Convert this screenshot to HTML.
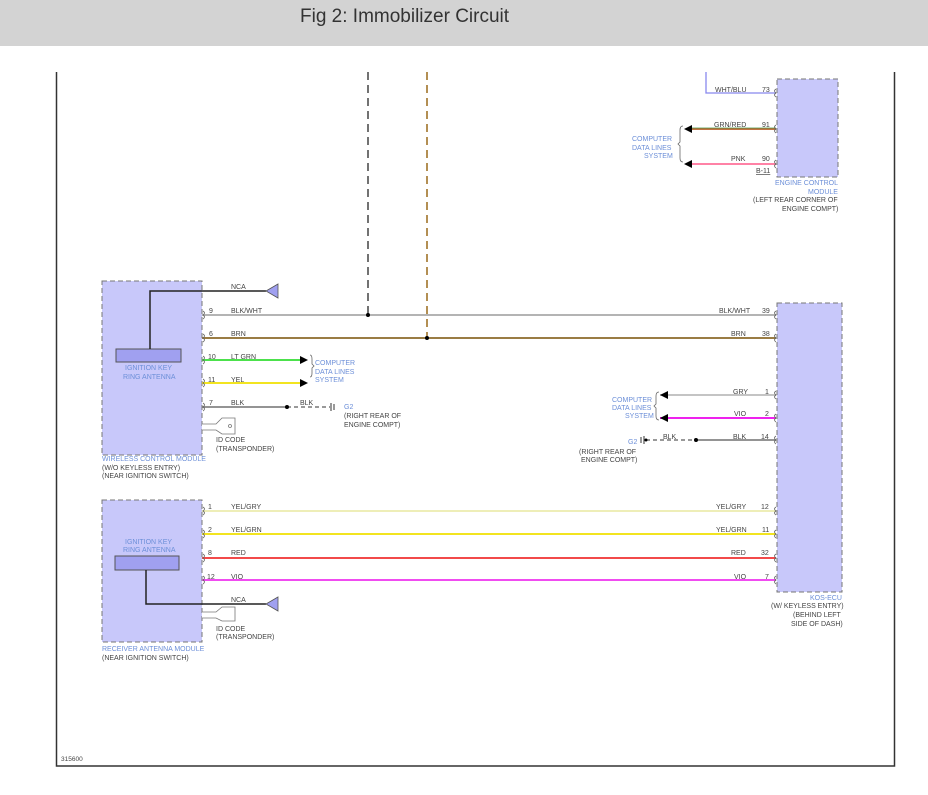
<!DOCTYPE html>
<html><head><meta charset="utf-8"><style>
html,body{margin:0;padding:0;background:#fff;width:928px;height:795px;overflow:hidden}
.hdr{position:absolute;left:0;top:0;width:928px;height:46px;background:#d3d3d3}
.hdr span{position:absolute;left:300px;top:6px;font:19px "Liberation Sans",sans-serif;color:#333}
svg{position:absolute;left:0;top:0}
text{font-family:"Liberation Sans",sans-serif;font-size:7px;fill:#444}
.b{fill:#6c8fd8}
</style></head><body>
<div class="hdr"><span>Fig 2: Immobilizer Circuit</span></div>
<svg width="928" height="795" viewBox="0 0 928 795">
<path d="M56.5 72V766H894.5V72" fill="none" stroke="#333" stroke-width="1.5"/>
<text x="61" y="761" style="font-size:6.5px">315600</text>

<g fill="#c8c8fa" stroke="#777" stroke-dasharray="5,3">
<rect x="102" y="281" width="100" height="174"/>
<rect x="102" y="500" width="100" height="142"/>
<rect x="777" y="79" width="61" height="98"/>
<rect x="777" y="303" width="65" height="289"/>
</g>
<rect x="116" y="349" width="65" height="13" fill="#a0a0f0" stroke="#555"/>
<rect x="115" y="556" width="64" height="14" fill="#a0a0f0" stroke="#555"/>
<text class="b" x="125" y="370">IGNITION KEY</text>
<text class="b" x="123" y="379">RING ANTENNA</text>
<text class="b" x="125" y="544">IGNITION KEY</text>
<text class="b" x="123" y="552">RING ANTENNA</text>

<path d="M368 72V315" stroke="#444" stroke-width="1.5" stroke-dasharray="8,5"/>
<path d="M427 72V338" stroke="#9a6a1a" stroke-width="1.5" stroke-dasharray="8,5"/>

<path d="M150 349V291H266" fill="none" stroke="#222" stroke-width="1.5"/>
<path d="M266 291L278 284V298Z" fill="#a0a0f0" stroke="#555" stroke-width="0.8"/>
<path d="M202 315H776" stroke="#888" stroke-width="1.3"/>
<path d="M202 338H776" stroke="#8b6a2a" stroke-width="1.7"/>
<path d="M202 360H300" stroke="#33dd33" stroke-width="1.7"/>
<path d="M202 383H300" stroke="#f0e000" stroke-width="1.7"/>
<path d="M300 356L308 360L300 364Z M300 379L308 383L300 387Z" fill="#000"/>
<path d="M202 407H287" stroke="#555" stroke-width="1.3"/>
<path d="M287 407H330" stroke="#333" stroke-dasharray="4,3"/>
<path d="M331 403V411M334 404V410" stroke="#333"/>
<circle cx="287" cy="407" r="2" fill="#000"/>
<circle cx="368" cy="315" r="2" fill="#000"/>
<circle cx="427" cy="338" r="2" fill="#000"/>
<path d="M310 355q2 0 2 4v5l2 2l-2 2v5q0 4-2 4" fill="none" stroke="#666" stroke-width="0.8"/>
<text x="231" y="289">NCA</text>
<text x="209" y="313">9</text><text x="231" y="313">BLK/WHT</text>
<text x="209" y="336">6</text><text x="231" y="336">BRN</text>
<text x="208" y="359">10</text><text x="231" y="359">LT GRN</text>
<text x="208" y="382">11</text><text x="231" y="382">YEL</text>
<text x="209" y="405">7</text><text x="231" y="405">BLK</text><text x="300" y="405">BLK</text>
<text class="b" x="315" y="365">COMPUTER</text>
<text class="b" x="315" y="374">DATA LINES</text>
<text class="b" x="315" y="382">SYSTEM</text>
<text class="b" x="344" y="409">G2</text>
<text x="344" y="418">(RIGHT REAR OF</text>
<text x="344" y="427">ENGINE COMPT)</text>
<g fill="#fff" stroke="#777" stroke-width="0.8">
<path d="M202 424H216L222 418H235V434H222L216 430H202"/>
<circle cx="230" cy="426" r="1.5"/>
</g>
<text x="216" y="442">ID CODE</text>
<text x="216" y="451">(TRANSPONDER)</text>
<text class="b" x="102" y="461">WIRELESS CONTROL MODULE</text>
<text x="102" y="470">(W/O KEYLESS ENTRY)</text>
<text x="102" y="478">(NEAR IGNITION SWITCH)</text>

<path d="M202 511H776" stroke="#e8e8a0" stroke-width="1.4"/>
<path d="M202 534H776" stroke="#f0e000" stroke-width="1.7"/>
<path d="M202 558H776" stroke="#f03030" stroke-width="1.7"/>
<path d="M202 580H776" stroke="#ee33ee" stroke-width="1.7"/>
<path d="M146 570V604H266" fill="none" stroke="#222" stroke-width="1.5"/>
<path d="M266 604L278 597V611Z" fill="#a0a0f0" stroke="#555" stroke-width="0.8"/>
<text x="208" y="509">1</text><text x="231" y="509">YEL/GRY</text>
<text x="208" y="532">2</text><text x="231" y="532">YEL/GRN</text>
<text x="208" y="555">8</text><text x="231" y="555">RED</text>
<text x="207" y="579">12</text><text x="231" y="579">VIO</text>
<text x="231" y="602">NCA</text>
<g fill="#fff" stroke="#777" stroke-width="0.8">
<path d="M202 612H216L222 607H235V621H222L216 618H202"/>
</g>
<text x="216" y="631">ID CODE</text>
<text x="216" y="639">(TRANSPONDER)</text>
<text class="b" x="102" y="651">RECEIVER ANTENNA MODULE</text>
<text x="102" y="660">(NEAR IGNITION SWITCH)</text>

<path d="M706 72V93H776" fill="none" stroke="#8888ee" stroke-width="1.3"/>
<path d="M690 129H776" stroke="#b8602a" stroke-width="1.7"/>
<path d="M690 128H776" stroke="#4a9a4a" stroke-width="0.7"/>
<path d="M690 164H776" stroke="#ff7099" stroke-width="1.7"/>
<path d="M684 129L692 125V133Z M684 164L692 160V168Z" fill="#000"/>
<path d="M683 126q-3 0-3 4v12l-2 2l2 2v12q0 4 3 4" fill="none" stroke="#666" stroke-width="0.8"/>
<text x="715" y="92">WHT/BLU</text><text x="762" y="92">73</text>
<text x="714" y="127">GRN/RED</text><text x="762" y="127">91</text>
<text x="731" y="161">PNK</text><text x="762" y="161">90</text>
<text x="756" y="173" style="text-decoration:underline">B-11</text>
<text class="b" x="632" y="141">COMPUTER</text>
<text class="b" x="632" y="150">DATA LINES</text>
<text class="b" x="644" y="158">SYSTEM</text>
<text class="b" x="775" y="185">ENGINE CONTROL</text>
<text class="b" x="808" y="194">MODULE</text>
<text x="753" y="202">(LEFT REAR CORNER OF</text>
<text x="782" y="211">ENGINE COMPT)</text>

<path d="M660 395H776" stroke="#bbb" stroke-width="1.7"/>
<path d="M660 418H776" stroke="#ee22ee" stroke-width="2"/>
<path d="M660 395L668 391V399Z M660 418L668 414V422Z" fill="#000"/>
<path d="M659 392q-3 0-3 4v8l-2 2l2 2v8q0 4 3 4" fill="none" stroke="#666" stroke-width="0.8"/>
<path d="M696 440H776" stroke="#555" stroke-width="1.3"/>
<path d="M646 440H696" stroke="#333" stroke-dasharray="4,3"/>
<path d="M644 436V444M641 437V443" stroke="#333"/>
<circle cx="696" cy="440" r="2" fill="#000"/>
<circle cx="646" cy="440" r="1.5" fill="#000"/>
<text x="733" y="394">GRY</text><text x="765" y="394">1</text>
<text x="734" y="416">VIO</text><text x="765" y="416">2</text>
<text x="733" y="439">BLK</text><text x="761" y="439">14</text>
<text x="663" y="439">BLK</text>
<text class="b" x="612" y="402">COMPUTER</text>
<text class="b" x="612" y="410">DATA LINES</text>
<text class="b" x="625" y="418">SYSTEM</text>
<text class="b" x="628" y="444">G2</text>
<text x="579" y="454">(RIGHT REAR OF</text>
<text x="581" y="462">ENGINE COMPT)</text>
<text x="716" y="509">YEL/GRY</text><text x="761" y="509">12</text>
<text x="716" y="532">YEL/GRN</text><text x="762" y="532">11</text>
<text x="731" y="555">RED</text><text x="761" y="555">32</text>
<text x="734" y="579">VIO</text><text x="765" y="579">7</text>
<text class="b" x="810" y="600">KOS-ECU</text>
<text x="771" y="608">(W/ KEYLESS ENTRY)</text>
<text x="793" y="617">(BEHIND LEFT</text>
<text x="791" y="626">SIDE OF DASH)</text>

<g fill="none" stroke="#666" stroke-width="0.8">
<path d="M203 311q3 2 0 4q3 2 0 4M203 334q3 2 0 4q3 2 0 4M203 356q3 2 0 4q3 2 0 4M203 379q3 2 0 4q3 2 0 4M203 403q3 2 0 4q3 2 0 4"/>
<path d="M203 507q3 2 0 4q3 2 0 4M203 530q3 2 0 4q3 2 0 4M203 554q3 2 0 4q3 2 0 4M203 576q3 2 0 4q3 2 0 4"/>
<path d="M776 89q-3 2 0 4q-3 2 0 4M776 125q-3 2 0 4q-3 2 0 4M776 160q-3 2 0 4q-3 2 0 4"/>
<path d="M776 311q-3 2 0 4q-3 2 0 4M776 334q-3 2 0 4q-3 2 0 4M776 391q-3 2 0 4q-3 2 0 4M776 414q-3 2 0 4q-3 2 0 4M776 436q-3 2 0 4q-3 2 0 4"/>
<path d="M776 507q-3 2 0 4q-3 2 0 4M776 530q-3 2 0 4q-3 2 0 4M776 554q-3 2 0 4q-3 2 0 4M776 576q-3 2 0 4q-3 2 0 4"/>
</g>
<text x="762" y="313">39</text><text x="719" y="313">BLK/WHT</text>
<text x="762" y="336">38</text><text x="731" y="336">BRN</text>
</svg>
</body></html>
